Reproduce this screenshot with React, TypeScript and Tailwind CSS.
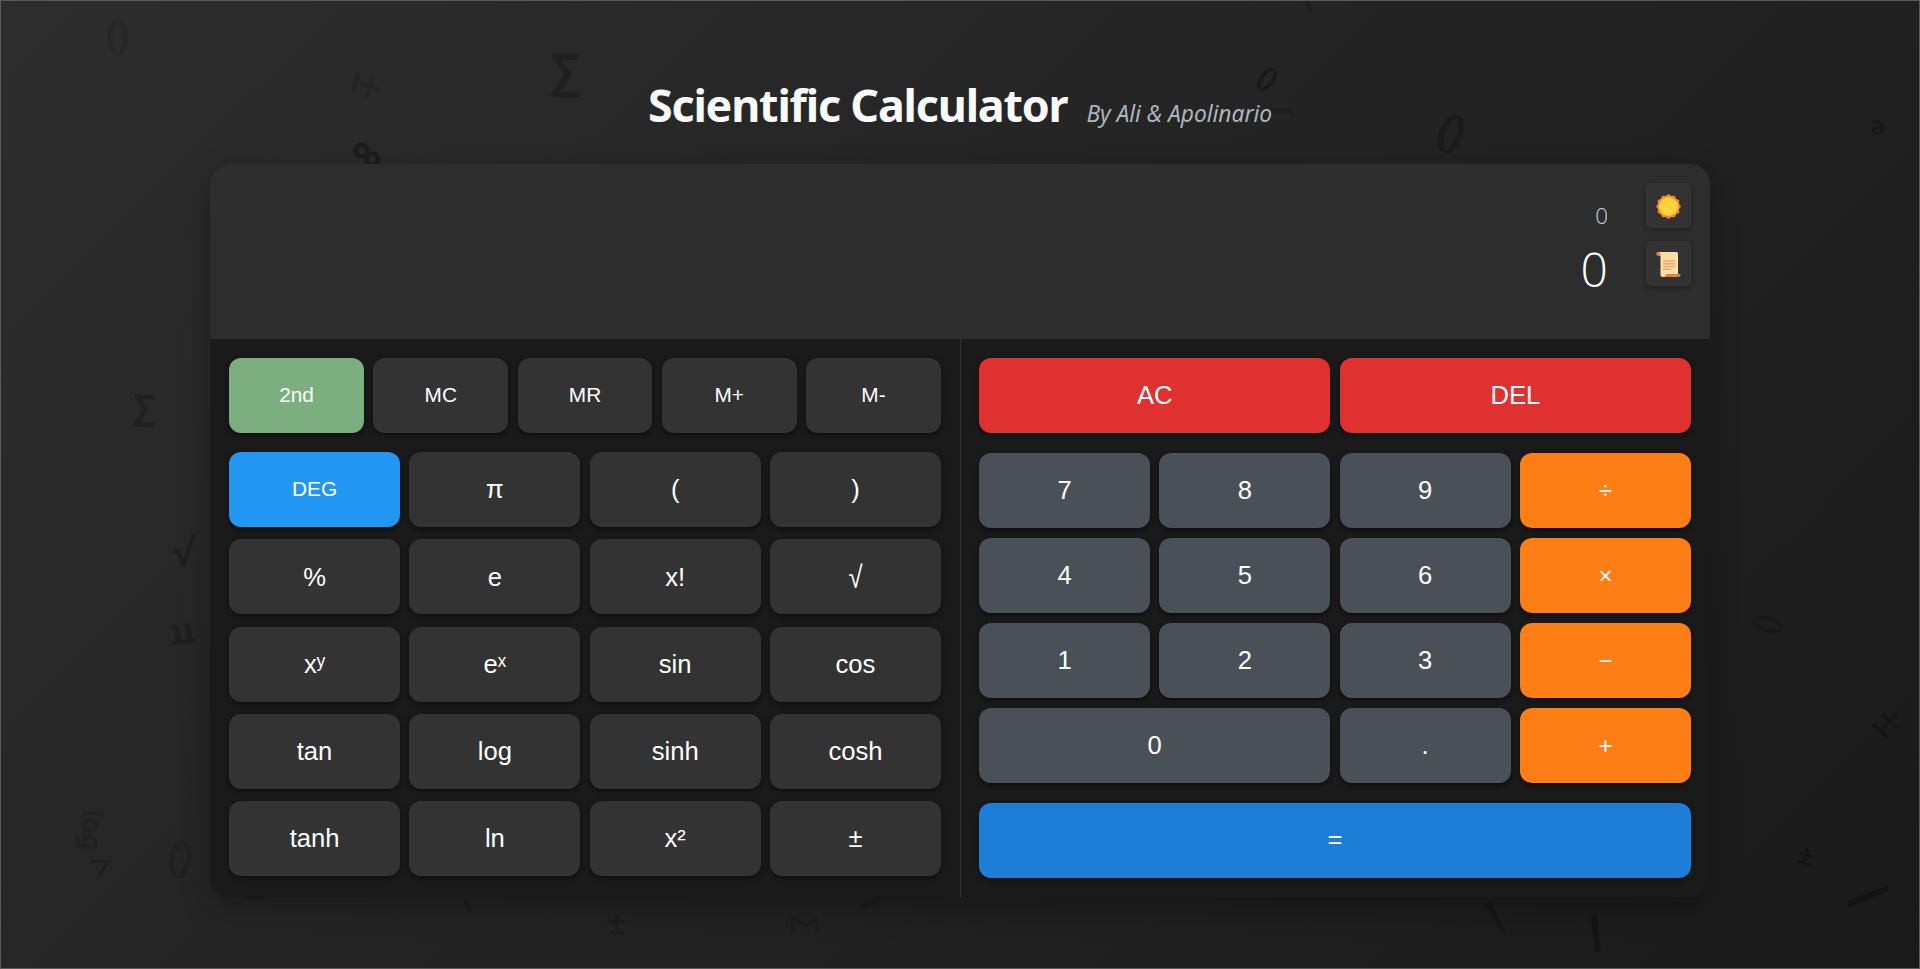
import type { ReactNode } from "react";

const BASE =
  "flex h-[75px] items-center justify-center rounded-xl text-white shadow-[0_2px_5px_rgba(0,0,0,0.5)]";

function Key({ children, className }: { children: ReactNode; className: string }) {
  return <button className={`${BASE} ${className}`}>{children}</button>;
}

const GLYPHS: [string, number, number, number, number, string, string][] = [
  // text, centre x, centre y, rotation, size, opacity, weight
  ["()", 115, 32, 0, 40, "opacity-10", "font-bold tracking-[-0.08em]"],
  ["±", 369, 86, 108, 44, "opacity-12", "font-semibold"],
  ["∑", 564, 68, 1, 46, "opacity-20", "font-bold"],
  ["∞", 367, 153, 38, 50, "opacity-30", "font-bold"],
  ["∑", 143, 405, 3, 34, "opacity-20", "font-bold"],
  ["√", 182, 550, 0, 38, "opacity-20", "font-bold"],
  ["π", 182, 636, 174, 36, "opacity-20", "font-bold"],
  ["log", 92, 829, 92, 27, "opacity-12", "font-bold"],
  ["()", 178, 854, 8, 42, "opacity-12", "font-bold tracking-[-0.08em]"],
  ["±", 616, 921, 0, 32, "opacity-15", "font-semibold"],
  ["∑", 808, 923, 90, 28, "opacity-12", "font-semibold"],
  ["±", 1805, 853, 15, 28, "opacity-25", "font-semibold"],
  ["±", 1889, 720, 42, 42, "opacity-20", "font-semibold"],
  ["()", 1770, 623, 105, 32, "opacity-15", "font-bold tracking-[-0.08em]"],
  ["e", 1877, 129, 180, 26, "opacity-25", "font-bold"],
  ["()", 1450, 128, 20, 44, "opacity-20", "font-bold tracking-[-0.08em]"],
  ["()", 1267, 75, 35, 28, "opacity-30", "font-bold tracking-[-0.08em]"],
];

function Backdrop() {
  return (
    <div className="pointer-events-none absolute inset-0 overflow-hidden text-black" aria-hidden="true">
      {GLYPHS.map(([text, x, y, angle, size, opacity, weight]) => (
        <span
          key={`${x}-${y}`}
          className={`absolute leading-none whitespace-nowrap ${opacity} ${weight}`}
          style={{
            left: x,
            top: y,
            fontSize: size,
            transform: `translate(-50%, -50%) rotate(${angle}deg)`,
          }}
        >
          {text}
        </span>
      ))}
      <svg className="absolute inset-0 h-full w-full" viewBox="0 0 1920 969" fill="none" stroke="#000">
        <path d="M1308 0l3 11" strokeWidth="3" opacity=".2" />
        <path d="M1175 112h-5M1270 110h21q3 2 2 7" strokeWidth="4" opacity=".12" />
        <path d="M465 901l5 12" strokeWidth="4" opacity=".15" />
        <path d="M1489 904l16 29" strokeWidth="4" opacity=".2" />
        <path d="M1595 915l4 38" strokeWidth="6" opacity=".25" />
        <path d="M1850 905l40-16" strokeWidth="6" opacity=".25" />
        <path d="M89 862h18l-10 15" strokeWidth="3.500" opacity=".12" />
        <path d="M240 897q13 6 27 0z" fill="#000" opacity=".15" />
        <path d="M858 907q14 0 22-10M884 898h3" strokeWidth="5" opacity=".12" />
      </svg>
    </div>
  );
}

function Sun() {
  const points = Array.from({ length: 24 }, (_, i) => {
    const r = i % 2 ? 10.9 : 12.5;
    const a = (i * Math.PI) / 12;
    return `${12.5 + r * Math.sin(a)},${12.5 - r * Math.cos(a)}`;
  }).join(" ");
  return (
    <svg className="h-[25px] w-[25px]" viewBox="0 0 25 25">
      <polygon points={points} fill="#ff822d" />
      <circle cx="12.5" cy="12.5" r="9.6" fill="#ffd33b" />
    </svg>
  );
}

function Scroll() {
  return (
    <svg className="h-[25px] w-[25px]" viewBox="0 0 25 25">
      <path d="M2.5 0H7v4H3Q.3 4 .3 2.300V1Q.5 0 2.500 0" fill="#d3883e" />
      <path d="M3 0h17.500Q22 0 22 1.500V25H7Q4.500 25 4.500 22.500V3Q4.500 .8 3 0z" fill="#ffdea7" />
      <path d="M10 22h14.600q0 3-2.500 3H7.500Q10 24.500 10 22z" fill="#d3883e" />
      <path d="M7 9h12.500M7 14.500h12.500" stroke="#e8ab6a" strokeWidth="1.500" />
      <path d="M7 11.800h12.500M7 17.200h8" stroke="#e0a05c" strokeWidth="1.200" />
    </svg>
  );
}

const ICON =
  "flex h-[45px] w-[45px] items-center justify-center rounded-[5px] bg-[#333333] pt-[2px] shadow-[0_2px_5px_rgba(0,0,0,0.3)]";
const DARK = "bg-[#333333] text-[25.6px]";
const SLATE = "bg-[#495057] text-[25.6px]";
const ORANGE = "bg-[#fd7e14] text-[24px]";
const RED = "bg-[#e03131] text-[25.6px]";

const SCIENCE = [
  "π", "(", ")", "%", "e", "x!", "√", "xʸ", "eˣ", "sin", "cos",
  "tan", "log", "sinh", "cosh", "tanh", "ln", "x²", "±",
];
const DIGITS = ["7", "8", "9", "÷", "4", "5", "6", "×", "1", "2", "3", "−", "0", ".", "+"];

export default function App() {
  return (
    <main className="relative h-[969px] w-full overflow-hidden border border-[#5a5a5a] bg-linear-135 from-[#2d2d2d] to-[#1a1a1a] font-['Noto_Sans','Open_Sans',sans-serif]">
      <Backdrop />
      <div className="relative mx-auto w-[1500px]">
        <header className="flex h-[163px] items-baseline justify-center gap-[19px] pt-[71px]">
          <h1 className="text-[44.8px] leading-[66px] font-bold tracking-[-1.18px] text-[#f8f9fa]">Scientific Calculator</h1>
          <p className="text-[22.8px] tracking-[-0.05px] text-[#adb5bd] italic">By Ali &amp; Apolinario</p>
        </header>
        <section className="h-[733px] overflow-hidden rounded-[20px] bg-[#1a1a1a] shadow-[0_10px_30px_rgba(0,0,0,0.3)]">
          <div className="flex h-[175px] justify-end gap-[38px] bg-[#2d2d2d] pt-[19px] pr-[19px]">
            <div className="flex flex-col items-end font-['Open_Sans',sans-serif] font-light">
              <div className="pt-[18px] text-[22.4px] leading-[30px] text-[#ced4da]">0</div>
              <div className="pt-[5px] text-[48px] leading-[65px] text-white">0</div>
            </div>
            <div className="flex flex-col gap-[13px]">
              <button className={ICON} aria-label="Theme"><Sun /></button>
              <button className={ICON} aria-label="History"><Scroll /></button>
            </div>
          </div>
          <div className="grid h-[558px] grid-cols-2 font-['Liberation_Sans',Arial,sans-serif]">
            <div className="px-[19.2px] pt-[19px]">
              <div className="grid grid-cols-5 gap-[9.6px]">
                <Key className="bg-[#7cae7f] pb-[2px] text-[20.8px]">2nd</Key>
                {["MC", "MR", "M+", "M-"].map((k) => (
                  <Key key={k} className="bg-[#333333] pb-[2px] text-[20.8px]">{k}</Key>
                ))}
              </div>
              <div className="mt-[19px] grid grid-cols-4 gap-x-[9.6px] gap-y-[12.25px]">
                <Key className="bg-[#2196f3] pb-[2px] text-[20.8px]">DEG</Key>
                {SCIENCE.map((k) => (
                  <Key key={k} className={DARK}>
                    {k === "√" ? <span className="scale-y-120">{k}</span> : k}
                  </Key>
                ))}
              </div>
            </div>
            <div className="border-l border-[#333333] pt-[19px] pr-[19.2px] pl-[18.2px]">
              <div className="grid grid-cols-2 gap-[9.6px]">
                <Key className={RED}>AC</Key>
                <Key className={RED}>DEL</Key>
              </div>
              <div className="mt-5 grid grid-cols-4 gap-x-[9.6px] gap-y-[10px]">
                {DIGITS.map((k) => (
                  <Key
                    key={k}
                    className={`${"÷×−+".includes(k) ? ORANGE : SLATE} ${k === "0" ? "col-span-2" : ""}`}
                  >
                    {k}
                  </Key>
                ))}
              </div>
              <Key className="mt-5 w-full bg-[#1c7ed6] pb-[2px] text-[25.6px]">=</Key>
            </div>
          </div>
        </section>
      </div>
    </main>
  );
}
